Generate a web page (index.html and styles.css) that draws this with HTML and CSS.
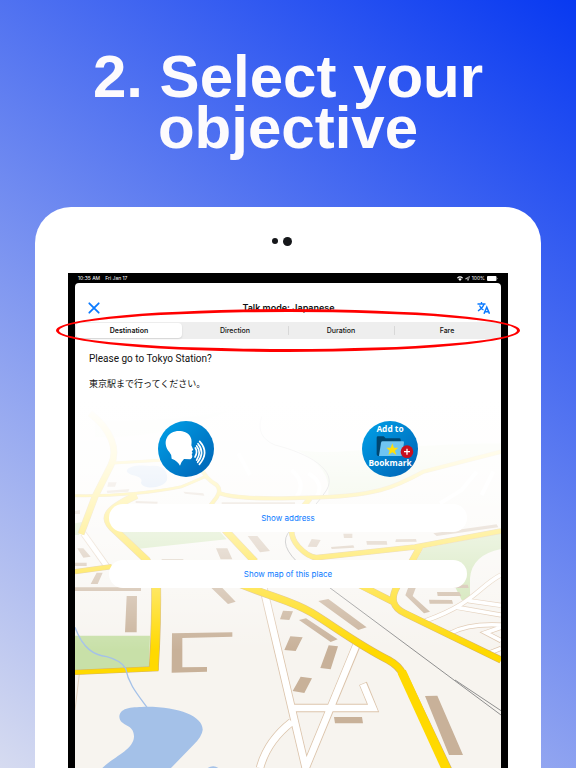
FILE: index.html
```html
<!DOCTYPE html>
<html lang="en">
<head>
    <meta charset="UTF-8">
    <meta name="viewport" content="width=device-width, initial-scale=1.0">
    <title>Select your objective</title>
    <link rel="stylesheet" href="styles.css">
</head>
<body>
    <h1>2. Select your<br>objective</h1>
    <div class="tablet">
        <div class="camera">
            <span class="sensor"></span>
            <span class="lens"></span>
        </div>
        <div class="bezel">
            <div class="status-bar">
                <span>10:35 AM</span>
                <span class="date">Fri Jan 17</span>
                <svg width="6" height="5" viewBox="0 0 12 10"><path d="M0 3.4Q6-2.4 12 3.4L10.6 5Q6 .8 1.4 5ZM2.4 6Q6 2.8 9.6 6L6 10Z" fill="#fff"/></svg>
                <svg width="5" height="5" viewBox="0 0 10 10"><path d="M1 5.5L9 1L6 9L5.2 5.2Z" fill="none" stroke="#fff" stroke-width="1.2"/></svg>
                <span>100%</span>
                <svg width="11" height="5" viewBox="0 0 22 10"><rect width="19" height="10" rx="2" fill="#fff"/><path d="M20 3.5q2 1.5 0 3z" fill="#fff"/></svg>
            </div>
            <div class="screen">
                <svg class="map" viewBox="0 0 1278 1104" aria-hidden="true">
                    <defs>
                        <linearGradient id="fade" x1="0" y1="0" x2="0" y2="1">
                            <stop offset="0" stop-color="#fff"/>
                            <stop offset=".16" stop-color="#fff" stop-opacity=".91"/>
                            <stop offset=".3" stop-color="#fff" stop-opacity=".76"/>
                            <stop offset=".4" stop-color="#fff" stop-opacity=".6"/>
                            <stop offset=".53" stop-color="#fff" stop-opacity=".34"/>
                            <stop offset=".68" stop-color="#fff" stop-opacity="0"/>
                        </linearGradient>
                    </defs>
                    <rect width="1278" height="1104" fill="#f7f4ef"/>
                    <!-- parks -->
                    <g fill="#c8e0a8">
                        <path d="M0 707H225L222 803L0 812Z"/>
                        <path d="M125 395H435L455 418L185 447Z"/>
                        <path d="M665 150C800 170 900 135 1278 130V155L1045 215C980 260 880 285 760 286Q770 200 665 150Z" opacity=".7"/>
                        <path d="M1045 445L1278 400V447Q1190 465 1185 535V600H1160L1140 560L1020 490Z"/>
                        <path d="M0 370L25 365L12 405H0Z"/>
                        <path d="M60 110Q250 120 470 30Q280 70 60 60Z" opacity=".4"/>
                    </g>
                    <!-- water -->
                    <g fill="#a4c1e8">
                        <path d="M215 920C315 920 385 950 383 990Q381 1010 355 1035L288 1104H82C115 1070 175 1050 177 1010C178 970 135 980 133 950C135 920 175 922 215 920Z"/>
                        <path d="M398 1104Q415 1094 430 1104Z"/>
                        <path d="M155 213C160 195 200 195 225 198C265 192 280 215 276 240C265 268 200 268 198 248C210 225 160 230 155 213Z"/>
                    </g>
                    <!-- side streets -->
                    <g fill="none" stroke="#dcc4ab" stroke-width="25">
                        <path d="M562 550L692 1104M844 737L692 1104M657 924H894L864 850M650 966C600 1005 568 1055 555 1104"/>
                        <path d="M25 400L100 505" stroke-width="20"/>
                        <path d="M1278 525C1210 560 1200 610 1050 663M1145 622L1278 645M1180 602L1278 616M1125 700Q1180 670 1278 675M1278 682L1232 698L1278 722M1235 762L1278 745" stroke-width="15"/>
                    </g>
                    <g fill="none" stroke="#fff" stroke-width="20">
                        <path d="M562 550L692 1104M844 735L692 1104M657 924H894L864 852M650 966C600 1005 568 1055 555 1104"/>
                        <path d="M25 400L100 505" stroke-width="15"/>
                        <path d="M1278 525C1210 560 1200 610 1050 663M1145 622L1278 645M1180 602L1278 616M1125 700Q1180 670 1278 675M1278 682L1232 698L1278 722M1235 762L1278 745" stroke-width="11"/>
                        <path d="M1205 215L1160 270L1095 310M1255 215L1220 285M650 210Q695 250 665 290M700 220Q750 250 725 290M490 160L525 225" stroke-width="12"/>
                    </g>
                    <path d="M13 822L0 930" fill="none" stroke="#dcc4ab" stroke-width="2"/>
                    <!-- railway -->
                    <path d="M560 50Q540 110 600 135C700 160 790 210 755 270Q730 310 660 380Q600 420 665 484L760 560L1278 945M1140 840L1278 932" fill="none" stroke="#8f8f8f" stroke-width="3"/>
                    <!-- main roads -->
                    <g fill="none" stroke="#d4b36a">
                        <path d="M45 40C110 90 130 150 108 195L60 290L18 402" stroke-width="21"/>
                        <path d="M0 287C120 290 250 275 320 260Q350 248 390 230M115 189L270 180" stroke-width="9"/>
                        <path d="M380 205Q390 235 425 255Q440 270 425 292L400 325M430 278C480 298 600 297 700 293C900 290 960 262 1045 215L1278 155" stroke-width="13"/>
                        <path d="M185 286C90 330 75 355 125 395L215 480L240 530M410 340L455 395L540 485" stroke-width="23"/>
                        <path d="M705 295L660 350Q635 400 670 440Q700 472 725 473L1020 441L1278 393" stroke-width="17"/>
                        <path d="M1035 441L1005 495L966 560Q935 615 990 640L1278 780M855 555L953 605" stroke-width="21"/>
                        <path d="M243 530C245 640 242 720 236 810" stroke-width="30"/>
                        <path d="M0 515L110 500M0 817L250 806" stroke-width="16"/>
                        <path d="M490 550C600 595 650 602 710 638S850 735 940 780Q973 798 985 825L1120 1110" stroke-width="24"/>
                    </g>
                    <g fill="none" stroke="#ffd900">
                        <path d="M45 40C110 90 130 150 108 195L60 290L18 402" stroke-width="18"/>
                        <path d="M0 287C120 290 250 275 320 260Q350 248 390 230M115 189L270 180" stroke-width="7"/>
                        <path d="M380 205Q390 235 425 255Q440 270 425 292L400 325M430 278C480 298 600 297 700 293C900 290 960 262 1045 215L1278 155" stroke-width="10"/>
                        <path d="M185 286C90 330 75 355 125 395L215 480L240 530M410 340L455 395L540 485" stroke-width="20"/>
                        <path d="M705 295L660 350Q635 400 670 440Q700 472 725 473L1020 441L1278 393" stroke-width="14"/>
                        <path d="M1035 441L1005 495L966 560Q935 615 990 640L1278 780M855 555L953 605" stroke-width="18"/>
                        <path d="M243 530C245 640 242 720 236 810" stroke-width="26"/>
                        <path d="M0 515L110 500M0 817L250 806" stroke-width="13"/>
                        <path d="M490 550C600 595 650 602 710 638S850 735 940 780Q973 798 985 825L1120 1110" stroke-width="20"/>
                        <path d="M980 815L1115 1110" stroke-width="27"/>
                    </g>
                    <!-- river, runs over the road -->
                    <path d="M0 682C25 750 60 765 95 770Q140 782 152 806C160 850 185 880 216 922" fill="none" stroke="#a4c1e8" stroke-width="4"/>
                    <!-- buildings -->
                    <g fill="#c8b199">
                        <path d="M0 562H198V573H0ZM155 588H186L185 697H150ZM291 700L472 697V710L322 714V802L396 801V815L290 818Z"/>
                        <path d="M407 562H440L482 605L459 612ZM65 518H83L68 552H47ZM7 445H25L47 470L25 473ZM0 488H35V498H0Z"/>
                        <path d="M423 445H457L472 478H437ZM518 408H547L585 453L555 457ZM260 478H325V490H260ZM182 303L248 305L247 311L182 309Z"/>
                        <path d="M100 247H125L120 260H97ZM95 272L163 267L160 275L97 279ZM325 275L385 280L388 287L330 281ZM440 307H660V312H440ZM0 333L15 330V342H0Z"/>
                        <path d="M710 417L737 420L725 441L698 440ZM805 401H832V414H807ZM768 441L835 436L838 443L770 447ZM874 423H935L937 434H876ZM963 418L1023 417L1025 425L961 426ZM1075 400L1265 373L1270 382L1085 408Z"/>
                        <path d="M730 603L760 597L875 682L850 690ZM672 660L693 655L788 718L767 726ZM646 709L683 712L662 753L628 750ZM624 632L654 634L643 660L615 658Z"/>
                        <path d="M761 736L789 739L767 808L736 804ZM677 830L711 835L688 879L653 873ZM777 951H861L864 970H780ZM1050 888L1087 887L1164 1065H1122Z"/>
                        <path d="M1000 562H1023L1013 588L1065 635L1047 640L991 586ZM1086 576H1153L1159 588H1088ZM1062 599L1131 600L1134 611H1064ZM1113 554H1178L1181 564H1117Z"/>
                    </g>
                    <rect width="1278" height="1104" fill="url(#fade)"/>
                </svg>
                <div class="content">
                    <div class="nav">
                        <button class="icon-button" aria-label="Close">
                            <svg width="12" height="12" viewBox="0 0 12 12"><path d="M1.3 1.3L10.7 10.7M10.7 1.3L1.3 10.7" stroke="#0a7aff" stroke-width="1.8" stroke-linecap="round"/></svg>
                        </button>
                        <h2>Talk mode: Japanese</h2>
                        <button class="icon-button" aria-label="Translate">
                            <svg width="13" height="12" viewBox="0 0 26 24" fill="none" stroke="#0a7aff" stroke-width="2.6"><path d="M1 4H17M9 0V4M2 18C9 13 13 9 14 4M5 7Q7 13 13 16"/><path d="M14 23.500L19.500 10.500L25 23.500M16 19.500H23" stroke-width="3"/></svg>
                        </button>
                    </div>
                    <div class="tabs">
                        <input type="radio" name="objective" id="destination" checked>
                        <label for="destination">Destination</label>
                        <input type="radio" name="objective" id="direction">
                        <label for="direction">Direction</label>
                        <input type="radio" name="objective" id="duration">
                        <label for="duration">Duration</label>
                        <input type="radio" name="objective" id="fare">
                        <label for="fare">Fare</label>
                        <div class="highlight"></div>
                    </div>
                    <div class="phrase">
                        <p>Please go to Tokyo Station?</p>
                        <p class="japanese" lang="ja">東京駅まで行ってください。</p>
                    </div>
                    <div class="actions">
                        <button class="round-button" aria-label="Speak">
                            <svg viewBox="0 0 168 168">
                                <defs>
                                    <linearGradient id="blue" x1="0" y1="0" x2="1" y2="1">
                                        <stop offset=".1" stop-color="#009be3"/>
                                        <stop offset=".9" stop-color="#0067b8"/>
                                    </linearGradient>
                                </defs>
                                <circle cx="84" cy="84" r="84" fill="url(#blue)"/>
                                <path d="M66 134C61 124 54 118 41 113Q41 100 34 93C23 82 20 63 26 52C36 28 65 26 82 34C99 42 103 56 100 73L106 87L101 90L104 96L101 99L103 105Q103 114 97 115L78 114Q71 120 66 134Z" fill="#fff"/>
                                <g fill="none" stroke="#fff" stroke-width="5" stroke-linecap="round">
                                    <path d="M112 81Q120 93 111 108"/>
                                    <path d="M116 75Q131 94 116 117"/>
                                    <path d="M120 68Q142 94 119 124"/>
                                    <path d="M125 61Q155 94 124 130"/>
                                </g>
                            </svg>
                        </button>
                        <button class="round-button" aria-label="Add to Bookmark">
                            <svg viewBox="0 0 168 168">
                                <circle cx="84" cy="84" r="84" fill="url(#blue)"/>
                                <path d="M44 50Q44 46 48 46H65L71 52H112Q116 52 116 56V105H49Q44 105 44 100Z" fill="#00466f"/>
                                <path d="M62 61H123Q126 61 126 65L119 105H51L57 65Q58 61 62 61Z" fill="#6fc5f2"/>
                                <path d="M91 67L96 80L109 80L99 89L103 102L91 94L79 102L83 89L73 80L86 80Z" fill="#ffdf0b"/>
                                <circle cx="135" cy="92" r="19" fill="#c80f1e"/>
                                <path d="M135 83V101M126 92H144" stroke="#fff" stroke-width="4"/>
                                <text x="84" y="34" class="badge-text">Add to</text>
                                <text x="84" y="134" class="badge-text">Bookmark</text>
                            </svg>
                        </button>
                    </div>
                    <div class="links">
                        <button class="pill">Show address</button>
                        <button class="pill">Show map of this place</button>
                    </div>
                </div>
            </div>
        </div>
    </div>
</body>
</html>
```

FILE: styles.css
```css
* {
    box-sizing: border-box;
}
body {
    margin: 0;
    min-height: 100vh;
    padding: 51px 35px 0;
    display: flex;
    flex-direction: column;
    background: linear-gradient(36deg, #d6dbf0, #0839f1);
    font-family: Inter, "Noto Sans CJK JP", sans-serif;
    color: #111;
}
h1, h2, p {
    margin: 0;
}
h1 {
    font: bold 60px/51px "Liberation Sans", Arial, sans-serif;
    text-align: center;
    color: #fdfbfd;
}
button {
    padding: 0;
    border: none;
    background: none;
    font-family: inherit;
    cursor: pointer;
}
svg {
    display: block;
}
.tablet {
    flex: 1;
    display: flex;
    flex-direction: column;
    margin-top: 54px;
    padding: 0 33px;
    background: #fff;
    border-radius: 36px 36px 0 0;
}
.camera {
    height: 66px;
    padding: 2px 12px 0 0;
    display: flex;
    align-items: center;
    justify-content: center;
    gap: 5px;
}
.sensor, .lens {
    width: 6px;
    height: 6px;
    border-radius: 50%;
    background: #15171a;
}
.lens {
    width: 9px;
    height: 9px;
}
.bezel {
    flex: 1;
    display: flex;
    flex-direction: column;
    padding: 0 7px;
    background: #000;
}
.status-bar {
    height: 10px;
    padding: 0 3px;
    display: flex;
    align-items: center;
    gap: 2px;
    color: #fff;
    font-size: 5px;
    line-height: 8px;
}
.date {
    margin: 0 auto 0 3px;
}
.screen {
    flex: 1;
    display: grid;
    align-items: start;
    background: #fff;
    border-radius: 4px 4px 0 0;
}
.map, .content {
    grid-area: 1 / 1;
    min-width: 0;
}
.map {
    width: 100%;
    margin-top: 117px;
}
.nav {
    height: 39px;
    padding: 11px 11px 0 13px;
    display: flex;
    align-items: center;
    justify-content: space-between;
}
.nav h2 {
    font-size: 9px;
    line-height: 12px;
    font-weight: 600;
}
.tabs {
    position: relative;
    display: flex;
    height: 17px;
    padding: 1px;
    background: #eee;
    border-radius: 4px;
}
.tabs input {
    position: absolute;
    opacity: 0;
}
.tabs label {
    flex: 1;
    font-size: 7px;
    line-height: 15px;
    font-weight: 500;
    text-align: center;
    border-radius: 4px;
}
.tabs input:checked + label {
    background: #fff;
    font-weight: 600;
    box-shadow: 0 1px 2px rgba(0,0,0,0.12);
}
#duration + label, #fare + label {
    background: linear-gradient(#d8d8d8, #d8d8d8) left / 1px 9px no-repeat;
}
/* red ring around the tabs */
.highlight {
    position: absolute;
    inset: -13px -19px;
    border: 3px solid #f00;
    border-radius: 50%;
    pointer-events: none;
}
.phrase {
    padding: 13px 14px 0;
    font-family: Roboto, "Noto Sans CJK JP", sans-serif;
    font-size: 10px;
    line-height: 14px;
}
.japanese {
    margin-top: 11px;
    font-size: 9px;
}
.actions {
    display: flex;
    justify-content: space-around;
    padding: 30px 9px 0;
}
.round-button {
    width: 56px;
    height: 56px;
    border-radius: 50%;
}
.badge-text {
    font: bold 25px "Open Sans", "Noto Sans", sans-serif;
    fill: #fff;
    text-anchor: middle;
}
.links {
    display: grid;
    gap: 28px;
    padding: 27px 34px 0;
}
.pill {
    height: 28px;
    background: #fff;
    border-radius: 14px;
    color: #0a7aff;
    font-size: 8px;
    line-height: 12px;
}
```
